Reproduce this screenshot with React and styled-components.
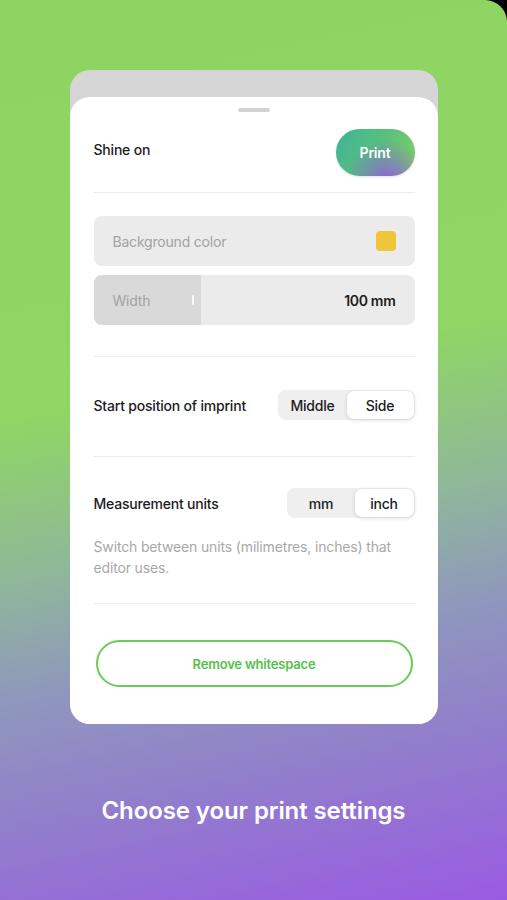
import styled, { createGlobalStyle } from "styled-components";

const GlobalStyle = createGlobalStyle`
  html, body {
    margin: 0;
    padding: 0;
    background: #000;
  }
  body {
    font-family: Inter, "Noto Sans", "Liberation Sans", sans-serif;
    -webkit-font-smoothing: antialiased;
  }
`;

const Screen = styled.div`
  width: 507px;
  height: 900px;
  box-sizing: border-box;
  padding-top: 70px;
  border-top-right-radius: 22px;
  background: linear-gradient(
    168deg,
    #8dd463 0%,
    #8fd664 42%,
    #8fb79a 58%,
    #8f97bd 70%,
    #917fcb 82%,
    #9a5be2 100%
  );
  display: flex;
  flex-direction: column;
  align-items: center;
`;

const Shell = styled.div`
  width: 368px;
  background: #d6d6d6;
  border-radius: 20px;
  padding-top: 27px;
  overflow: hidden;
`;

const Sheet = styled.div`
  background: #fff;
  border-radius: 20px 20px 0 0;
  padding: 11px 23px 37px 24px;
  display: flex;
  flex-direction: column;
`;

const Handle = styled.div`
  align-self: center;
  width: 32px;
  height: 4px;
  border-radius: 2px;
  background: #d2d2d2;
  margin-bottom: 17px;
`;

const Row = styled.div`
  display: flex;
  align-items: center;
  justify-content: space-between;
  padding: ${(p) => p.$pad || "0"};
`;

const Label = styled.div`
  font-size: 14px;
  font-weight: 500;
  color: #1c1c1e;
  letter-spacing: -0.2px;
  margin-bottom: ${(p) => p.$lift || 0}px;
`;

const PrintButton = styled.button`
  width: 79px;
  height: 47px;
  border: none;
  border-radius: 24px;
  background: radial-gradient(ellipse at 65% 115%, #8b5ce0 0%, rgba(139, 92, 224, 0) 58%),
    linear-gradient(120deg, #3fb39a 0%, #58c07c 50%, #86d25e 100%);
  color: #fff;
  font-family: inherit;
  font-size: 14px;
  font-weight: 600;
  letter-spacing: -0.2px;
  box-shadow: 0 1px 3px rgba(0, 0, 0, 0.12);
`;

const Divider = styled.div`
  height: 1px;
  background: #ededed;
`;

const Fields = styled.div`
  display: flex;
  flex-direction: column;
  gap: 9px;
  padding: 23px 0 31px;
`;

const Field = styled.div`
  height: 50px;
  border-radius: 8px;
  background: #ebebeb;
  display: flex;
  align-items: center;
  justify-content: space-between;
  padding-right: 19px;
  overflow: hidden;
`;

const FieldText = styled.span`
  padding-left: 19px;
  font-size: 14px;
  color: #a2a2a2;
  letter-spacing: -0.2px;
`;

const Swatch = styled.div`
  width: 20px;
  height: 20px;
  border-radius: 4px;
  background: #efc63b;
`;

const SliderFill = styled.div`
  position: relative;
  width: 107px;
  height: 100%;
  background: #d9d9d9;
  display: flex;
  align-items: center;
`;

const SliderKnob = styled.div`
  position: absolute;
  right: 7px;
  top: 20px;
  width: 2px;
  height: 10px;
  border-radius: 1px;
  background: #f8f8f8;
`;

const Value = styled.span`
  font-size: 14px;
  font-weight: 600;
  color: #1c1c1e;
  letter-spacing: -0.3px;
`;

const Segmented = styled.div`
  display: flex;
  height: 30px;
  border-radius: 8px;
  background: #efefef;
  padding: 1px;
  box-sizing: border-box;
`;

const Segment = styled.div`
  width: ${(p) => p.$w}px;
  display: flex;
  align-items: center;
  justify-content: center;
  border-radius: 7px;
  font-size: 14px;
  font-weight: 500;
  color: #1c1c1e;
  letter-spacing: -0.2px;
  background: ${(p) => (p.$active ? "#fff" : "transparent")};
  box-shadow: ${(p) => (p.$active ? "0 1px 4px rgba(0,0,0,0.14)" : "none")};
`;

const Hint = styled.p`
  margin: 18px 0 25px;
  font-size: 14px;
  line-height: 21px;
  color: #a8a8a8;
  letter-spacing: -0.15px;
`;

const OutlineButton = styled.button`
  margin: 36px 2px 0;
  height: 47px;
  border: 2px solid #6cc95a;
  border-radius: 24px;
  background: #fff;
  color: #56c04a;
  font-family: inherit;
  font-size: 13px;
  font-weight: 600;
  letter-spacing: -0.2px;
`;

const Caption = styled.h1`
  margin: 72px 0 0;
  color: #fff;
  font-size: 24px;
  font-weight: 600;
  letter-spacing: -0.1px;
`;

export default function App() {
  return (
    <>
      <GlobalStyle />
      <Screen>
        <Shell>
          <Sheet>
            <Handle />
            <Row $pad="0 0 16px">
              <Label $lift={6}>Shine on</Label>
              <PrintButton>Print</PrintButton>
            </Row>
            <Divider />
            <Fields>
              <Field>
                <FieldText>Background color</FieldText>
                <Swatch />
              </Field>
              <Field>
                <SliderFill>
                  <FieldText>Width</FieldText>
                  <SliderKnob />
                </SliderFill>
                <Value>100 mm</Value>
              </Field>
            </Fields>
            <Divider />
            <Row $pad="33px 0 36px">
              <Label>Start position of imprint</Label>
              <Segmented>
                <Segment $w={68}>Middle</Segment>
                <Segment $w={67} $active>
                  Side
                </Segment>
              </Segmented>
            </Row>
            <Divider />
            <Row $pad="31px 0 0">
              <Label>Measurement units</Label>
              <Segmented>
                <Segment $w={67}>mm</Segment>
                <Segment $w={59} $active>
                  inch
                </Segment>
              </Segmented>
            </Row>
            <Hint>Switch between units (milimetres, inches) that editor uses.</Hint>
            <Divider />
            <OutlineButton>Remove whitespace</OutlineButton>
          </Sheet>
        </Shell>
        <Caption>Choose your print settings</Caption>
      </Screen>
    </>
  );
}
